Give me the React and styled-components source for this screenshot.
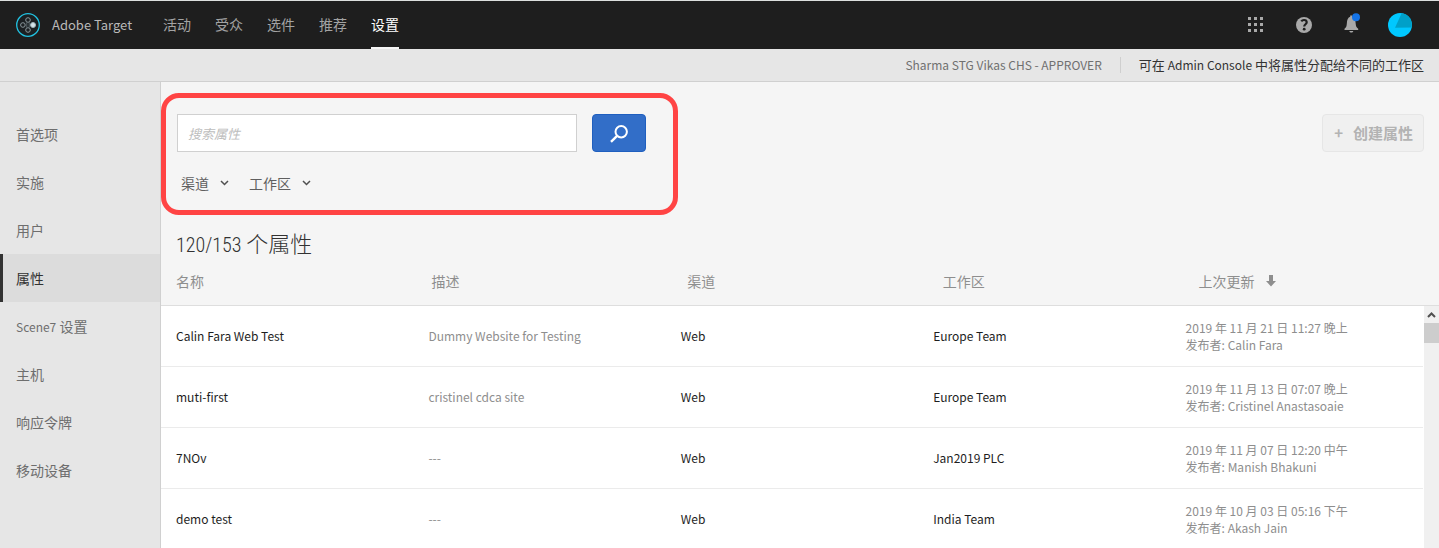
import React from "react";
import styled, { createGlobalStyle } from "styled-components";

const GlobalStyle = createGlobalStyle`
  *, *::before, *::after { box-sizing: border-box; }
  body {
    margin: 0;
    background: #f5f5f5;
    font-family: "Noto Sans CJK SC", sans-serif;
    font-size: 14px;
    line-height: 20px;
    color: #323232;
  }
  button, input { font: inherit; }
  a { color: inherit; text-decoration: none; }
`;

const Page = styled.div`
  display: flex;
  flex-direction: column;
  height: 100vh;
  overflow: hidden;
`;

const Latin = styled.span`
  font-size: 12px;
`;

const TopBar = styled.header`
  flex: none;
  display: flex;
  align-items: center;
  height: 49px;
  padding: 0 30px 0 16px;
  background: #1e1e1e;
  border-top: 1px solid #dcdfde;
`;

const Brand = styled.a`
  display: flex;
  align-items: center;
  gap: 12px;
  margin-right: 31px;
  font-size: 13px;
  color: #b9b9b9;
`;

const Nav = styled.nav`
  display: flex;
  flex: 1;
  gap: 24px;
`;

const NavLink = styled.a`
  height: 48px;
  line-height: 46px;
  color: ${(p) => (p.$active ? "#ffffff" : "#a3a3a3")};
  border-bottom: 2px solid ${(p) => (p.$active ? "#f5f5f5" : "transparent")};
`;

const Tools = styled.div`
  display: flex;
  align-items: center;
  gap: 30px;
`;

const IconButton = styled.button`
  display: flex;
  justify-content: center;
  width: 18px;
  padding: 0;
  border: 0;
  background: none;
  color: #a9a9a9;
  cursor: pointer;
  svg { flex: none; overflow: visible; }
`;

const SubBar = styled.div`
  flex: none;
  display: flex;
  justify-content: flex-end;
  align-items: center;
  height: 33px;
  padding: 0 15px;
  background: #e6e6e6;
  border-bottom: 1px solid #d0d0d0;
  font-size: 13px;
`;

const Account = styled.span`
  padding-right: 18px;
  margin-right: 18px;
  font-size: 12px;
  line-height: 16px;
  border-right: 1px solid #cfcfcf;
  color: #707070;
`;

const Body = styled.div`
  flex: 1;
  display: flex;
  min-height: 0;
`;

const Sidebar = styled.nav`
  flex: none;
  width: 161px;
  padding-top: 28px;
  background: #e6e6e6;
  border-right: 1px solid #d0d0d0;
`;

const SideLink = styled.a`
  display: block;
  height: 48px;
  line-height: 48px;
  padding-left: 13px;
  border-left: 3px solid ${(p) => (p.$active ? "#323232" : "transparent")};
  background: ${(p) => (p.$active ? "#dcdcdc" : "transparent")};
  color: ${(p) => (p.$active ? "#323232" : "#6e6e6e")};
`;

const Main = styled.main`
  flex: 1;
  min-width: 0;
  display: flex;
  flex-direction: column;
`;

const Toolbar = styled.div`
  flex: none;
  display: flex;
  justify-content: space-between;
  align-items: flex-start;
  padding: 11px 15px 0 0;
`;

const FilterPanel = styled.section`
  width: 517px;
  height: 122px;
  padding: 16px 11px;
  border: 5px solid #ff4444;
  border-radius: 18px;
`;

const SearchForm = styled.form`
  display: flex;
  gap: 15px;
`;

const SearchInput = styled.input`
  width: 400px;
  height: 38px;
  padding: 0 10px;
  border: 1px solid #d0d0d0;
  background: #ffffff;
  font-size: 13px;
  &::placeholder { color: #bdbdbd; font-style: italic; }
`;

const SearchButton = styled.button`
  display: flex;
  align-items: center;
  justify-content: center;
  width: 54px;
  height: 38px;
  padding: 0;
  border: 1px solid #1f5fbf;
  border-radius: 4px;
  background: #326ec8;
`;

const Filters = styled.div`
  display: flex;
  gap: 20px;
  margin-top: 21px;
  padding-left: 4px;
`;

const FilterButton = styled.button`
  display: flex;
  align-items: center;
  gap: 11px;
  padding: 0;
  border: 0;
  background: none;
  color: #5f5f5f;
`;

const CreateButton = styled.button`
  display: flex;
  align-items: center;
  gap: 10px;
  height: 38px;
  margin-top: 21px;
  padding: 0 10px 0 11px;
  border: 1px solid #e6e6e6;
  border-radius: 4px;
  background: #f0f0f0;
  color: #b3b3b3;
  font-size: 15px;
  font-weight: 700;
`;

const Title = styled.h1`
  flex: none;
  height: 32px;
  margin: 11px 0 0;
  padding-left: 15px;
  font-size: 22px;
  line-height: 32px;
  font-weight: 300;
`;

const Count = styled.span`
  font-family: "Roboto Condensed", "Noto Sans CJK SC", sans-serif;
  font-size: 20px;
`;

const ListArea = styled.div`
  flex: 1;
  display: grid;
  grid-template: 48px 1fr / 1fr 15px;
  min-height: 0;
  overflow: hidden;
`;

const Table = styled.table`
  grid-area: 1 / 1 / -1 / -1;
  display: block;
`;

const Head = styled.thead`
  display: block;
`;

const Rows = styled.tbody`
  display: block;
  padding-right: 16px;
  background: #ffffff;
`;

const Row = styled.tr`
  display: grid;
  grid-template-columns: repeat(5, 1fr);
  align-items: center;
  height: ${(p) => (p.$head ? 48 : 61)}px;
  border-bottom: 1px solid ${(p) => (p.$head ? "#dedede" : "#ebebeb")};
`;

const HeadCell = styled.th`
  display: flex;
  align-items: center;
  gap: 12px;
  padding: 0 0 2px 15px;
  font-weight: 400;
  text-align: left;
  color: #8e8e8e;
`;

const Cell = styled.td`
  padding: 0 0 1px 15px;
  font-size: 12px;
  line-height: 17px;
  color: ${(p) => (p.$muted ? "#8e8e8e" : "#1e1e1e")};
`;

const Scrollbar = styled.div`
  grid-area: 2 / 2;
  background: #f0f0f0;
`;

const ScrollUp = styled.button`
  display: flex;
  align-items: center;
  justify-content: center;
  width: 15px;
  height: 17px;
  padding: 0;
  border: 0;
  background: none;
`;

const Thumb = styled.div`
  height: 20px;
  background: #cdcdcd;
`;

const Logo = () => (
  <svg width="24" height="24" viewBox="0 0 24 24" fill="none" aria-hidden="true">
    <circle cx="12" cy="12" r="11.3" fill="#1b2022" stroke="#22c1e0" strokeWidth="1.3" />
    <g stroke="#8b989c" strokeWidth="1">
      <circle cx="12" cy="7" r="2.3" />
      <circle cx="6.9" cy="12" r="2.3" />
      <circle cx="12" cy="17" r="2.3" />
      <path d="M10.8 9.300v5.400M13.200 9.300v5.400" stroke="#59666a" />
    </g>
    <circle cx="17" cy="12" r="2.500" fill="#d8e4e8" stroke="#9fb4bb" />
  </svg>
);

const GridIcon = () => (
  <svg width="16" height="16" viewBox="0 0 16 16" fill="currentColor" aria-hidden="true">
    {[0, 6, 12].map((y) => [0, 6, 12].map((x) => <rect key={`${x}-${y}`} x={x} y={y} width="3" height="3" />))}
  </svg>
);

const HelpIcon = () => (
  <svg width="18" height="18" viewBox="0 0 18 18" aria-hidden="true">
    <circle cx="9" cy="9" r="8" fill="currentColor" />
    <path d="M6.300 5.300C7 4.300 8 4 9 4c1.600 0 2.700.9 2.700 2.300C11.700 8.300 9.200 8.300 9.200 10.600" fill="none" stroke="#1e1e1e" strokeWidth="2.200" />
    <circle cx="9.200" cy="13.200" r="1.400" fill="#1e1e1e" />
  </svg>
);

const BellIcon = () => (
  <svg width="18" height="20" viewBox="0 2 18 20" aria-hidden="true">
    <path d="M1.500 17v-1.300c1.700-1.200 2.200-2.700 2.300-5C4 6.500 5 4.500 7.200 3.800V2.500h2v1.300c2.600.7 3.300 2.700 3.500 6.900.1 2.300.8 3.800 2.500 5V17z" fill="currentColor" />
    <path d="M6.300 18h4c-.3 1-1 1.500-2 1.500s-1.700-.5-2-1.500z" fill="currentColor" />
    <circle cx="13" cy="4.200" r="4" fill="#1473e6" />
  </svg>
);

const Avatar = () => (
  <svg width="24" height="24" viewBox="0 0 24 24" aria-hidden="true">
    <circle cx="12" cy="12" r="12" fill="#00c8ff" />
    <path d="M13.300 1 7 14.800 23.600 14.600A12 12 0 0 0 14.500.3z" fill="#00a0c8" />
  </svg>
);

const SearchIcon = () => (
  <svg width="18" height="20" viewBox="0 0 18 20" fill="none" stroke="#ffffff" strokeWidth="2" aria-hidden="true">
    <circle cx="11.200" cy="8.800" r="5.700" />
    <path d="M7.300 12.700 1 18.800" strokeWidth="2.400" />
  </svg>
);

const Chevron = ({ up }) => (
  <svg width="9" height="6" viewBox="0 0 9 6" fill="none" stroke="#505050" strokeWidth={up ? 2 : 1.5} aria-hidden="true">
    <path d={up ? "M1 5l3.500-3.500L8 5" : "M1 1l3.500 3.500L8 1"} />
  </svg>
);

const SortArrow = () => (
  <svg width="10" height="12" viewBox="0 0 10 12" fill="#8e8e8e" aria-hidden="true">
    <path d="M3 0h4v6h3l-5 5.500L0 6h3z" />
  </svg>
);

const NAV = ["活动", "受众", "选件", "推荐", "设置"];
const SIDE = [
  { label: "首选项" },
  { label: "实施" },
  { label: "用户" },
  { label: "属性", active: true },
  { prefix: "Scene7", label: " 设置" },
  { label: "主机" },
  { label: "响应令牌" },
  { label: "移动设备" },
];
const FILTERS = ["渠道", "工作区"];
const COLUMNS = ["名称", "描述", "渠道", "工作区"];
const PROPERTIES = [
  { name: "Calin Fara Web Test", description: "Dummy Website for Testing", channel: "Web", workspace: "Europe Team", date: "2019 年 11 月 21 日 11:27 晚上", author: "Calin Fara" },
  { name: "muti-first", description: "cristinel cdca site", channel: "Web", workspace: "Europe Team", date: "2019 年 11 月 13 日 07:07 晚上", author: "Cristinel Anastasoaie" },
  { name: "7NOv", description: "---", channel: "Web", workspace: "Jan2019 PLC", date: "2019 年 11 月 07 日 12:20 中午", author: "Manish Bhakuni" },
  { name: "demo test", description: "---", channel: "Web", workspace: "India Team", date: "2019 年 10 月 03 日 05:16 下午", author: "Akash Jain" },
];

export default function App() {
  return (
    <Page lang="zh-CN">
      <GlobalStyle />
      <TopBar>
        <Brand href="#"><Logo />Adobe Target</Brand>
        <Nav>
          {NAV.map((label) => (
            <NavLink key={label} href="#" $active={label === "设置"}>{label}</NavLink>
          ))}
        </Nav>
        <Tools>
          <IconButton aria-label="应用程序"><GridIcon /></IconButton>
          <IconButton aria-label="帮助"><HelpIcon /></IconButton>
          <IconButton aria-label="通知"><BellIcon /></IconButton>
          <IconButton aria-label="帐户"><Avatar /></IconButton>
        </Tools>
      </TopBar>
      <SubBar>
        <Account>Sharma STG Vikas CHS - APPROVER</Account>
        <a href="#">可在 <Latin>Admin Console</Latin> 中将属性分配给不同的工作区</a>
      </SubBar>
      <Body>
        <Sidebar>
          {SIDE.map(({ prefix, label, active }) => (
            <SideLink key={label} href="#" $active={active}>
              {prefix && <Latin>{prefix}</Latin>}{label}
            </SideLink>
          ))}
        </Sidebar>
        <Main>
          <Toolbar>
            <FilterPanel>
              <SearchForm onSubmit={(e) => e.preventDefault()}>
                <SearchInput type="text" placeholder="搜索属性" aria-label="搜索属性" />
                <SearchButton aria-label="搜索"><SearchIcon /></SearchButton>
              </SearchForm>
              <Filters>
                {FILTERS.map((label) => (
                  <FilterButton key={label} type="button">{label}<Chevron /></FilterButton>
                ))}
              </Filters>
            </FilterPanel>
            <CreateButton disabled><span>+</span>创建属性</CreateButton>
          </Toolbar>
          <Title><Count>120/153</Count> 个属性</Title>
          <ListArea>
            <Table>
              <Head>
                <Row $head>
                  {COLUMNS.map((label) => <HeadCell key={label}>{label}</HeadCell>)}
                  <HeadCell>上次更新<SortArrow /></HeadCell>
                </Row>
              </Head>
              <Rows>
                {PROPERTIES.map((p) => (
                  <Row key={p.name}>
                    <Cell>{p.name}</Cell>
                    <Cell $muted>{p.description}</Cell>
                    <Cell>{p.channel}</Cell>
                    <Cell>{p.workspace}</Cell>
                    <Cell $muted>{p.date}<br />发布者: {p.author}</Cell>
                  </Row>
                ))}
              </Rows>
            </Table>
            <Scrollbar>
              <ScrollUp aria-label="向上滚动"><Chevron up /></ScrollUp>
              <Thumb />
            </Scrollbar>
          </ListArea>
        </Main>
      </Body>
    </Page>
  );
}
